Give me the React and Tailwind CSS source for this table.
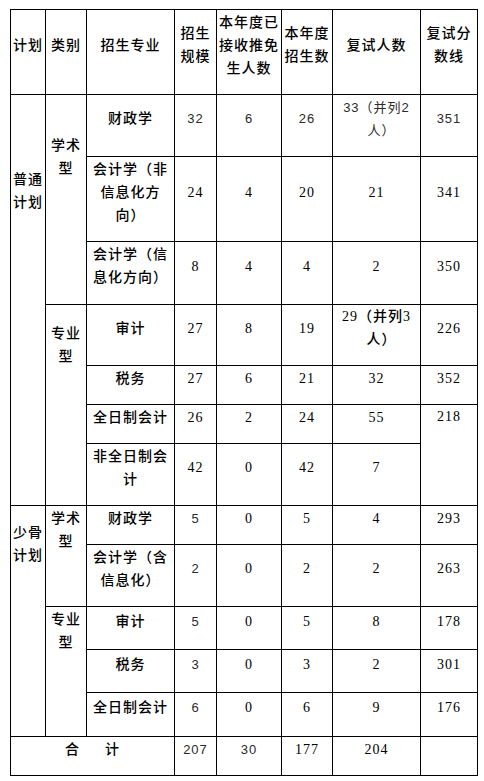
import React from 'react';

const cell = "border border-black text-center align-middle pt-0 pb-[14px] px-[2px] leading-[23px] font-medium";
const sans = "font-['Liberation_Sans','Noto_Sans_CJK_SC',sans-serif] !font-normal text-[13px] text-[#2a2a2a]";

const C = ({ children, className = "", ...rest }) => (
    <td className={`${cell} ${className}`} {...rest}>{children}</td>
);

const App = () => {
    return (
        <div className="w-[484px] min-h-[781px] bg-white pl-[10px] pt-[9px] text-black text-[14px] tracking-[1px] font-['Liberation_Serif','Noto_Sans_CJK_SC',serif]">
            <table className="border-collapse table-fixed w-[467px]">
                <colgroup>
                    <col className="w-[35px]" />
                    <col className="w-[41px]" />
                    <col className="w-[88px]" />
                    <col className="w-[42px]" />
                    <col className="w-[65px]" />
                    <col className="w-[51px]" />
                    <col className="w-[88px]" />
                    <col className="w-[57px]" />
                </colgroup>
                <thead>
                    <tr className="h-[85px]">
                        <th className={cell}>计划</th>
                        <th className={cell}>类别</th>
                        <th className={cell}>招生专业</th>
                        <th className={cell}>招生<br />规模</th>
                        <th className={cell}>本年度已<br />接收推免<br />生人数</th>
                        <th className={cell}>本年度<br />招生数</th>
                        <th className={cell}>复试人数</th>
                        <th className={cell}>复试分<br />数线</th>
                    </tr>
                </thead>
                <tbody>
                    {/* 普通计划 */}
                    <tr className="h-[62px]">
                        <C rowSpan={7} className="!align-top !pt-[73px]">普通<br />计划</C>
                        <C rowSpan={3} className="!align-top !pt-[39px]">学术<br />型</C>
                        <C>财政学</C>
                        <C className={sans}>32</C>
                        <C className={sans}>6</C>
                        <C className={sans}>26</C>
                        <C className={sans}>33（并列2<br /><span className="pl-[10px]">人）</span></C>
                        <C className={sans}>351</C>
                    </tr>
                    <tr className="h-[85px]">
                        <C>会计学（非<br />信息化方<br />向）</C>
                        <C>24</C>
                        <C>4</C>
                        <C>20</C>
                        <C>21</C>
                        <C>341</C>
                    </tr>
                    <tr className="h-[63px]">
                        <C>会计学（信<br />息化方向）</C>
                        <C>8</C>
                        <C>4</C>
                        <C>4</C>
                        <C>2</C>
                        <C>350</C>
                    </tr>
                    <tr className="h-[61px]">
                        <C rowSpan={4} className="!align-top !pt-[17px]">专业<br />型</C>
                        <C>审计</C>
                        <C>27</C>
                        <C>8</C>
                        <C>19</C>
                        <C>29（并列3<br /><span className="pl-[10px]">人）</span></C>
                        <C>226</C>
                    </tr>
                    <tr className="h-[39px]">
                        <C>税务</C>
                        <C>27</C>
                        <C>6</C>
                        <C>21</C>
                        <C>32</C>
                        <C>352</C>
                    </tr>
                    <tr className="h-[39px]">
                        <C>全日制会计</C>
                        <C>26</C>
                        <C>2</C>
                        <C>24</C>
                        <C>55</C>
                        <C rowSpan={2} className="!align-top">218</C>
                    </tr>
                    <tr className="h-[62px]">
                        <C>非全日制会<br />计</C>
                        <C>42</C>
                        <C>0</C>
                        <C>42</C>
                        <C>7</C>
                    </tr>

                    {/* 少骨计划 */}
                    <tr className="h-[39px]">
                        <C rowSpan={5} className="!align-top !pt-[15px]">少骨<br />计划</C>
                        <C rowSpan={2} className="!align-top !pt-[1px]">学术<br />型</C>
                        <C>财政学</C>
                        <C className={sans}>5</C>
                        <C>0</C>
                        <C>5</C>
                        <C>4</C>
                        <C>293</C>
                    </tr>
                    <tr className="h-[62px]">
                        <C>会计学（含<br />信息化）</C>
                        <C className={sans}>2</C>
                        <C>0</C>
                        <C>2</C>
                        <C>2</C>
                        <C>263</C>
                    </tr>
                    <tr className="h-[43px]">
                        <C rowSpan={3} className="!align-top !pt-[1px]">专业<br />型</C>
                        <C>审计</C>
                        <C className={sans}>5</C>
                        <C>0</C>
                        <C>5</C>
                        <C>8</C>
                        <C>178</C>
                    </tr>
                    <tr className="h-[43px]">
                        <C>税务</C>
                        <C className={sans}>3</C>
                        <C>0</C>
                        <C>3</C>
                        <C>2</C>
                        <C>301</C>
                    </tr>
                    <tr className="h-[44px]">
                        <C>全日制会计</C>
                        <C className={sans}>6</C>
                        <C>0</C>
                        <C>6</C>
                        <C>9</C>
                        <C>176</C>
                    </tr>

                    {/* 合计 */}
                    <tr className="h-[39px]">
                        <C colSpan={3}>
                            <span className="inline-flex gap-[25px]"><span>合</span><span>计</span></span>
                        </C>
                        <C className={sans}>207</C>
                        <C className={sans}>30</C>
                        <C>177</C>
                        <C>204</C>
                        <C></C>
                    </tr>
                </tbody>
            </table>
        </div>
    );
};

export default App;
